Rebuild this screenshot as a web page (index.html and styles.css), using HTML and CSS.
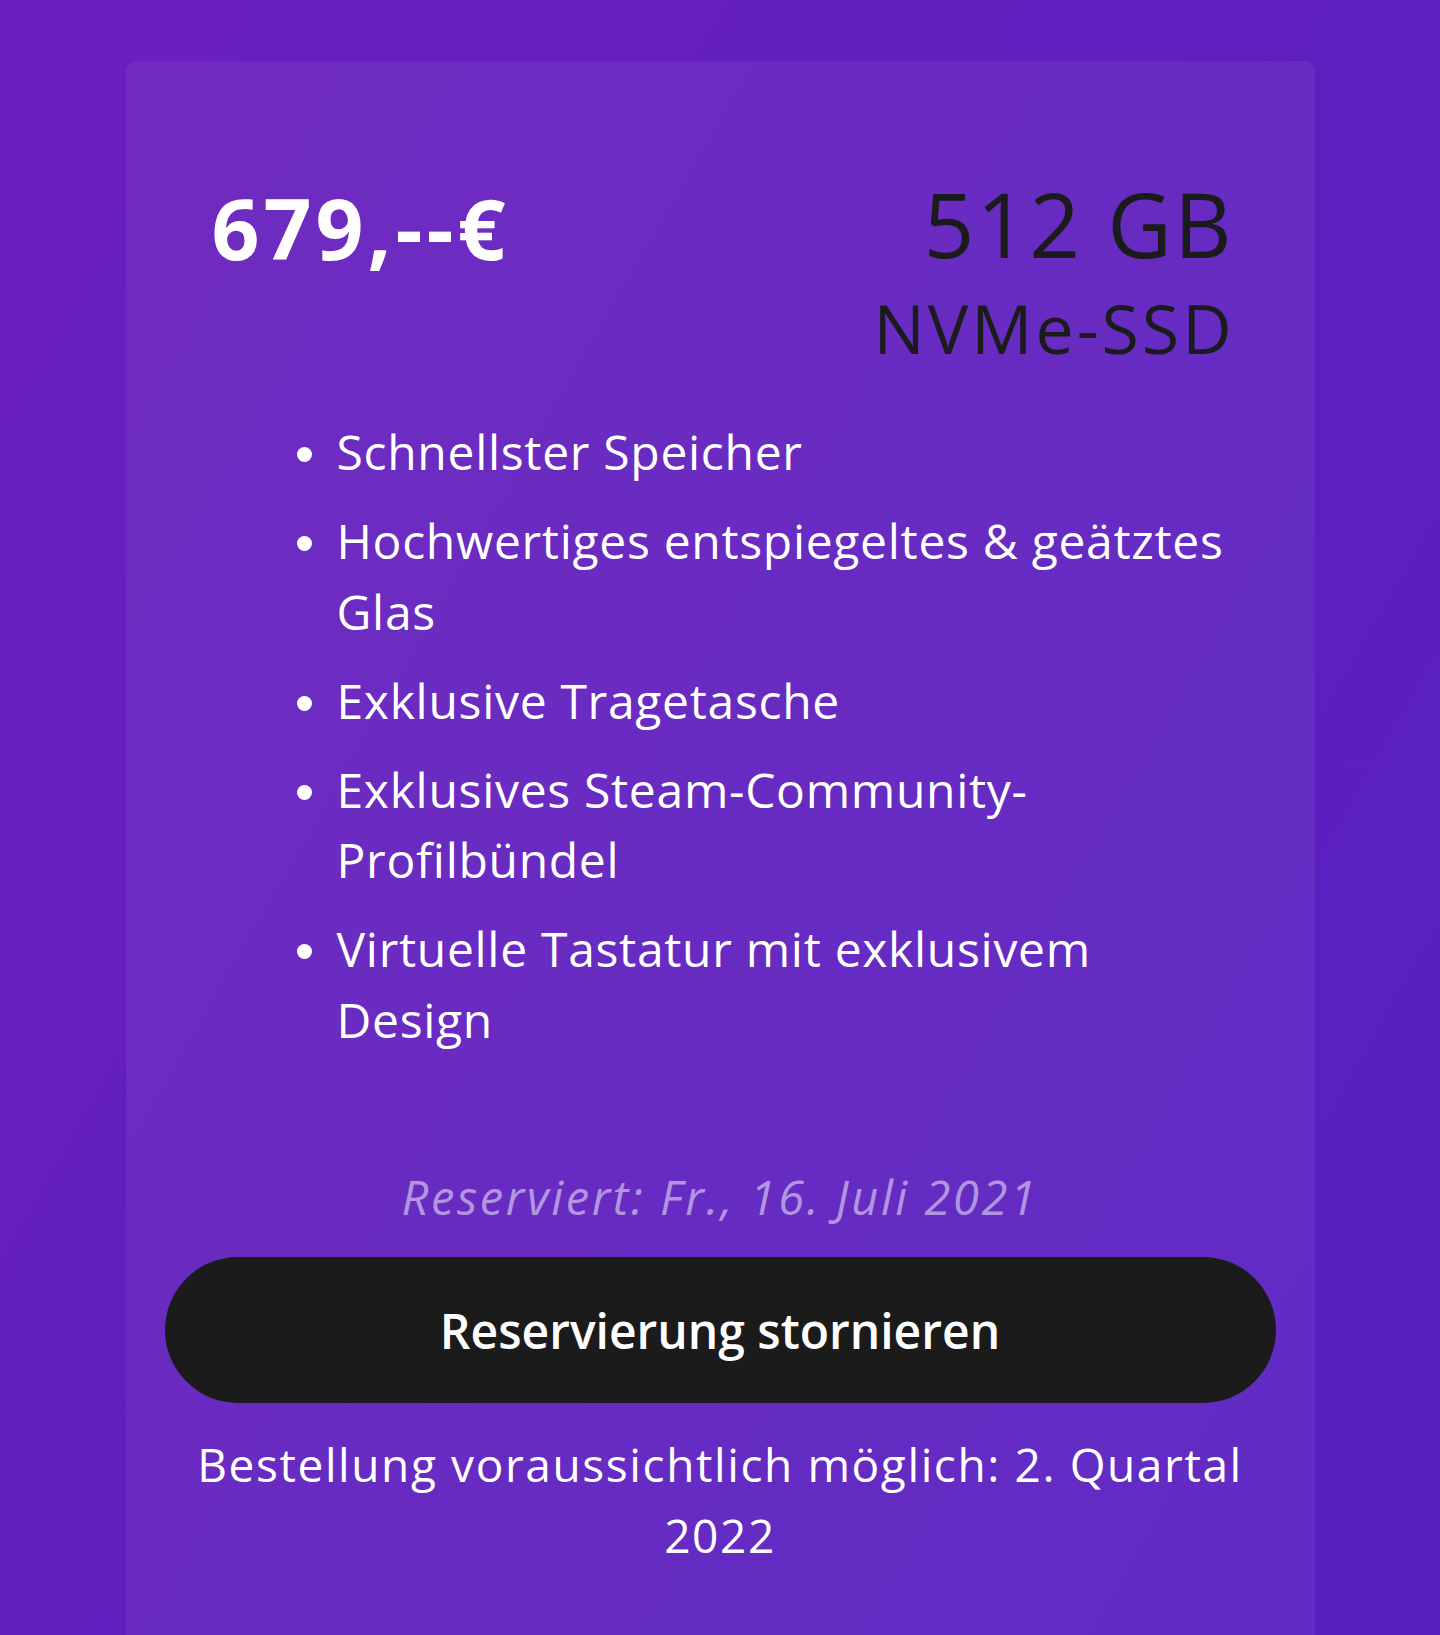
FILE: index.html
```html
<!DOCTYPE html>
<html lang="de">
<head>
  <meta charset="UTF-8">
  <meta name="viewport" content="width=device-width, initial-scale=1.0">
  <title>Steam Deck Reservierung</title>
  <link rel="stylesheet" href="styles.css">
</head>
<body>
  <div class="page">
    <!-- Reservation card -->
    <div class="card">
      <div class="card-head">
        <div class="price">679,--€</div>
        <div class="storage">
          <div class="storage-size">512 GB</div>
          <div class="storage-type">NVMe-SSD</div>
        </div>
      </div>
      <ul class="features">
        <li>Schnellster Speicher</li>
        <li>Hochwertiges entspiegeltes &amp; geätztes Glas</li>
        <li>Exklusive Tragetasche</li>
        <li>Exklusives Steam-Community-Profilbündel</li>
        <li>Virtuelle Tastatur mit exklusivem Design</li>
      </ul>
      <p class="reserved">Reserviert: Fr., 16. Juli 2021</p>
      <button class="cancel-button">Reservierung stornieren</button>
      <p class="order-note">Bestellung voraussichtlich möglich: 2. Quartal 2022</p>
    </div>
  </div>
</body>
</html>
```

FILE: styles.css
```css
/* Page background */
body, html {
  margin: 0;
  padding: 0;
  width: 100%;
  height: 100%;
  font-family: 'Open Sans', 'Noto Sans', sans-serif;
  overflow: hidden;
  color: #fff;
}
.page {
  min-height: 100%;
  box-sizing: border-box;
  padding-top: 61px;
  background: linear-gradient(120deg, #6a1fbd 0%, #611fbf 45%, #5620c1 100%);
}
.card {
  width: 1189px;
  min-height: 1600px;
  margin: 0 auto;
  box-sizing: border-box;
  padding: 118px 39px 0;
  background-color: rgba(255, 255, 255, 0.055);
  border-radius: 10px 10px 0 0;
}
.card-head {
  display: flex;
  justify-content: space-between;
  align-items: flex-start;
  padding: 0 44px 0 47px;
}
.price {
  margin-top: 7px;
  font-size: 84px;
  line-height: 84px;
  font-weight: bold;
  letter-spacing: 4px;
}
.storage {
  text-align: right;
  color: #1b1b1b;
}
.storage-size {
  font-size: 89px;
  line-height: 89px;
  letter-spacing: 2px;
  margin-right: -2px;
}
.storage-type {
  margin-top: 26px;
  margin-right: -3px;
  font-size: 68px;
  line-height: 68px;
  letter-spacing: 3px;
}
.features {
  list-style: none;
  margin: 55px 0 0;
  padding: 0 44px 0 132px;
  font-size: 48px;
  line-height: 70.5px;
  letter-spacing: 0.7px;
}
.features li {
  display: flex;
}
.features li + li {
  margin-top: 18.5px;
}
.features li::before {
  content: "";
  flex: none;
  width: 15px;
  height: 15px;
  margin: 30px 25px 0 0;
  border-radius: 50%;
  background-color: #fff;
}
.reserved {
  margin: 112px 0 0;
  text-align: center;
  font-size: 47px;
  line-height: 60px;
  font-style: italic;
  letter-spacing: 2.6px;
  color: rgba(255, 255, 255, 0.5);
}
.cancel-button {
  display: block;
  width: 100%;
  height: 146px;
  margin-top: 30px;
  border: none;
  border-radius: 73px;
  background-color: #1b1b1b;
  color: #fff;
  font-family: inherit;
  font-size: 48px;
  font-weight: 600;
  cursor: pointer;
}
.order-note {
  margin: 26px 0 0;
  text-align: center;
  font-size: 46px;
  line-height: 71px;
  letter-spacing: 1.6px;
}
```
